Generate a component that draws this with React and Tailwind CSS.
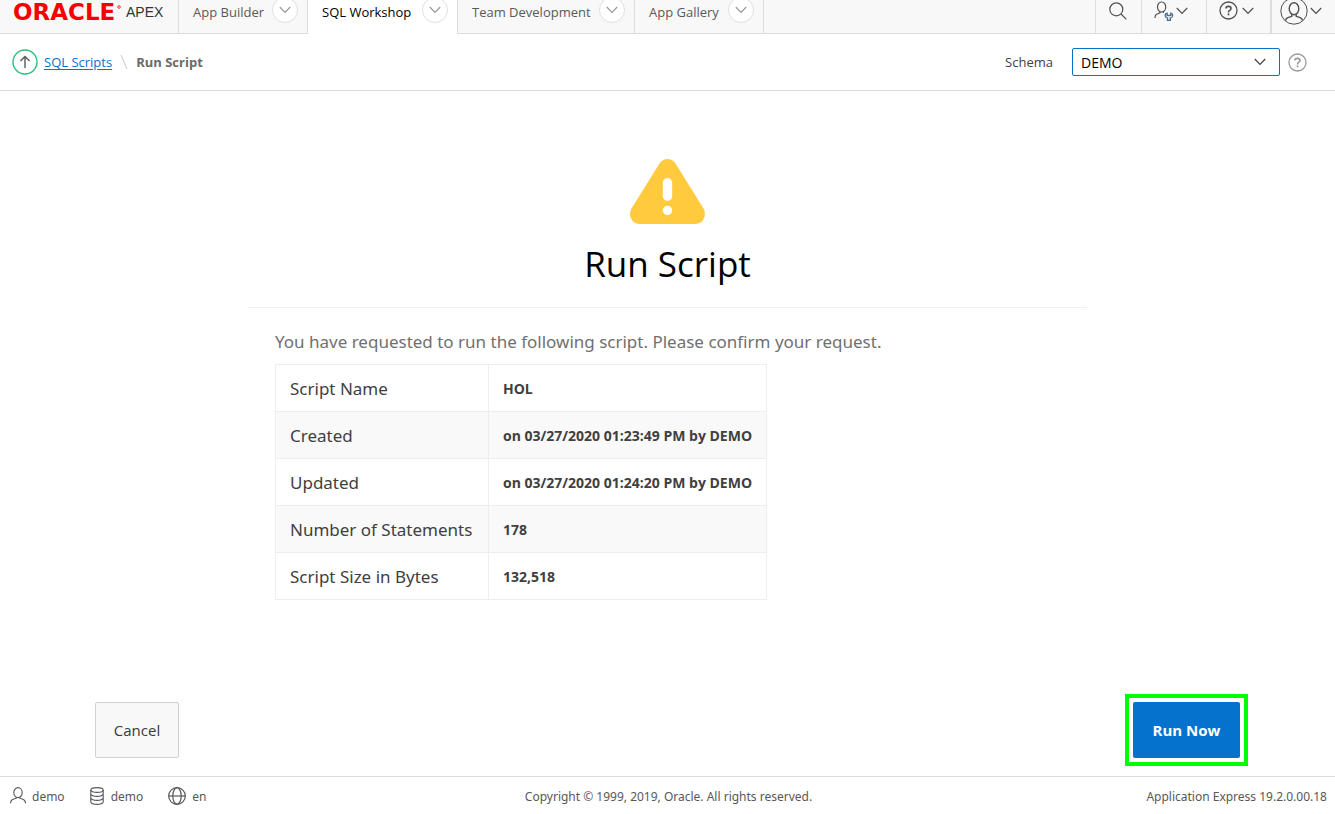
import React from "react";

function Chevron({ className = "" }) {
  return (
    <svg viewBox="0 0 12 8" className={className} fill="none" stroke="currentColor" strokeWidth="1.2" aria-hidden="true">
      <path d="M0.8 1 L6 6.4 L11.2 1" />
    </svg>
  );
}

function PersonIcon({ className = "" }) {
  return (
    <svg viewBox="0 0 16 17" className={className} fill="none" stroke="currentColor" strokeWidth="1.1" aria-hidden="true">
      <ellipse cx="8" cy="5.6" rx="4.2" ry="5" />
      <path d="M6.2 10 V11.2 L2.6 12.5 Q0.6 13.4 0.5 16.2 M9.8 10 V11.2 L13.4 12.5 Q15.4 13.4 15.5 16.2" />
    </svg>
  );
}

function AdminIcon() {
  return (
    <svg viewBox="0 0 20 20" className="h-5 w-5" fill="none" stroke="currentColor" strokeWidth="1.2" aria-hidden="true">
      <ellipse cx="7.6" cy="6" rx="4.1" ry="5" />
      <path d="M6 10.4 V11.8 L2.6 13.2 Q1 14 0.9 17 M9.4 10.4 V12" />
      <path
        d="M13.2 12.2 Q10.8 12.8 11.2 15 Q11.6 16.6 13.4 17 V19.4 H16.4 V17 Q18.4 16.6 18.7 15 Q18.9 12.8 16.7 12.2 V14.4 H13.2 Z"
        stroke="#4a6f8c"
        fill="#d5dfe7"
      />
    </svg>
  );
}

function HelpIcon({ className = "" }) {
  return (
    <svg viewBox="0 0 19 19" className={className} fill="none" stroke="currentColor" aria-hidden="true">
      <circle cx="9.5" cy="9.5" r="8.5" strokeWidth="1.3" />
      <path d="M7 7.6 Q7 5.4 9.5 5.4 Q12 5.4 12 7.4 Q12 8.6 10.6 9.4 Q9.5 10 9.5 11.4" strokeWidth="1.6" />
      <path d="M9.5 12.5 V14.3" strokeWidth="1.7" />
    </svg>
  );
}

function SearchIcon() {
  return (
    <svg viewBox="0 0 18 18" className="h-[18px] w-[18px]" fill="none" stroke="currentColor" strokeWidth="1.2" aria-hidden="true">
      <circle cx="7.3" cy="7.3" r="6.5" />
      <path d="M12 12 L17.4 17.4" />
    </svg>
  );
}

function AvatarIcon() {
  return (
    <svg viewBox="0 0 28 28" className="h-7 w-7" fill="none" stroke="currentColor" aria-hidden="true">
      <circle cx="14" cy="14" r="13.2" strokeWidth="1" />
      <ellipse cx="14" cy="11.8" rx="4.8" ry="6" strokeWidth="1.4" />
      <path d="M11.8 17.2 V19.3 L7.8 20.6 Q6 21.4 5.4 23.6 M16.2 17.2 V19.3 L20.2 20.6 Q22 21.4 22.6 23.6" strokeWidth="1.4" />
    </svg>
  );
}

function DatabaseIcon() {
  return (
    <svg viewBox="0 0 14 18" className="h-[18px] w-3.5" fill="none" stroke="currentColor" strokeWidth="1.1" aria-hidden="true">
      <ellipse cx="7" cy="3" rx="6.2" ry="2.4" />
      <path d="M0.8 3 V15 Q1.6 17.4 7 17.4 Q12.4 17.4 13.2 15 V3 M0.8 7 Q1.6 9.4 7 9.4 Q12.4 9.4 13.2 7 M0.8 11 Q1.6 13.4 7 13.4 Q12.4 13.4 13.2 11" />
    </svg>
  );
}

function GlobeIcon() {
  return (
    <svg viewBox="0 0 18 18" className="h-[18px] w-[18px]" fill="none" stroke="currentColor" strokeWidth="1.2" aria-hidden="true">
      <circle cx="9" cy="9" r="8.3" />
      <ellipse cx="9" cy="9" rx="4.2" ry="8.3" />
      <path d="M0.6 9 H17.4" />
    </svg>
  );
}

const tabs = [
  { label: "App Builder", size: "w-[129px]" },
  { label: "SQL Workshop", size: "w-[150px]", active: true },
  { label: "Team Development", size: "w-[177px]" },
  { label: "App Gallery", size: "w-[129px]" },
];

const details = [
  ["Script Name", "HOL"],
  ["Created", "on 03/27/2020 01:23:49 PM by DEMO"],
  ["Updated", "on 03/27/2020 01:24:20 PM by DEMO"],
  ["Number of Statements", "178"],
  ["Script Size in Bytes", "132,518"],
];

function Tab({ label, size, active }) {
  return (
    <div
      className={`flex shrink-0 items-center justify-between border-r border-[#dcdcdc] pr-[9px] pl-3.5 ${size} ${
        active ? "bg-white text-black" : "border-b bg-[#f8f8f8] text-[#585858]"
      }`}
    >
      <a href="#" className="pt-1.5 whitespace-nowrap">{label}</a>
      <button
        type="button"
        aria-label={`${label} menu`}
        className="flex h-[26px] w-[26px] shrink-0 items-center justify-center rounded-full border border-[#e0e0e0] bg-white text-[#999]"
      >
        <Chevron className="h-2 w-3" />
      </button>
    </div>
  );
}

function Header() {
  return (
    <header className="h-[34px] overflow-hidden">
      <div className="-mt-3.5 flex h-12 text-[13px]">
        <a href="#" className="flex w-[179px] shrink-0 items-center border-r border-b border-[#dcdcdc] bg-[#f8f8f8] pt-1 pl-[13px]">
          <span className="flex w-[113px] items-center text-[#f80000]">
            <span className="font-['DejaVu_Sans',sans-serif] text-[23px] leading-5 font-bold">ORACLE</span>
            <svg viewBox="0 0 4 14" className="ml-0.5 h-3.5 w-1" fill="none" stroke="currentColor" strokeWidth="0.8" aria-hidden="true">
              <circle cx="2" cy="2" r="1.3" />
            </svg>
          </span>
          <span className="pt-0.5 font-['Liberation_Sans',sans-serif] text-[14px] text-[#333]">APEX</span>
        </a>
        {tabs.map((tab) => (
          <Tab key={tab.label} {...tab} />
        ))}
        <div className="flex grow justify-end border-b border-[#dcdcdc] bg-[#f8f8f8] text-[#505050]">
          <button type="button" aria-label="Search" className="flex w-[46px] items-center justify-center border-l border-[#dcdcdc] pt-0.5 pr-0.5">
            <SearchIcon />
          </button>
          <button type="button" aria-label="Administration" className="flex w-[65px] items-center gap-0.5 border-l border-[#dcdcdc] pt-0.5 pl-3">
            <AdminIcon />
            <Chevron className="h-2 w-3" />
          </button>
          <button type="button" aria-label="Help" className="flex w-16 items-center gap-1 border-l border-[#dcdcdc] pt-0.5 pl-3">
            <HelpIcon className="h-[19px] w-[19px]" />
            <Chevron className="h-2 w-3" />
          </button>
          <button type="button" aria-label="Account" className="flex w-[65px] items-center gap-0.5 border-l-2 border-[#dcdcdc] pt-0.5 pl-2">
            <AvatarIcon />
            <Chevron className="h-2 w-3" />
          </button>
        </div>
      </div>
    </header>
  );
}

function Breadcrumb() {
  return (
    <div className="flex h-[57px] items-center justify-between border-b border-[#dcdcdc] pr-7 pl-3 text-[13px]">
      <nav aria-label="Breadcrumb" className="flex items-center">
        <a href="#" aria-label="Up" className="mr-1.5 text-[#585858]">
          <svg viewBox="0 0 26 26" className="h-[26px] w-[26px]" fill="none" aria-hidden="true">
            <circle cx="13" cy="13" r="12" stroke="#2bbf7e" strokeWidth="1.4" />
            <path d="M13 19 V7.4 M8.4 12 L13 7.4 L17.6 12" stroke="currentColor" strokeWidth="1.4" />
          </svg>
        </a>
        <a href="#" className="pt-0.5 text-[#0572ce] underline underline-offset-2">SQL Scripts</a>
        <svg viewBox="0 0 8 16" className="mx-2 h-4 w-2" fill="none" stroke="#c8c8c8" aria-hidden="true">
          <path d="M1 1 L7 15" />
        </svg>
        <span className="pt-0.5 font-bold text-[#6a6a6a]">Run Script</span>
      </nav>
      <div className="flex items-center">
        <label htmlFor="schema" className="mr-[19px] pt-0.5 text-[#404040]">Schema</label>
        <div className="grid w-52 items-center">
          <select
            id="schema"
            className="col-start-1 row-start-1 h-7 w-full appearance-none rounded-xs border border-[#0572ce] bg-white pl-2 text-[14px] text-black"
          >
            <option>DEMO</option>
          </select>
          <Chevron className="pointer-events-none col-start-1 row-start-1 mr-3.5 h-2 w-3 justify-self-end text-[#404040]" />
        </div>
        <button type="button" aria-label="Schema help" className="ml-2 text-[#999]">
          <HelpIcon className="h-[19px] w-[19px]" />
        </button>
      </div>
    </div>
  );
}

export default function App() {
  return (
    <div className="flex min-h-screen flex-col bg-white font-['Open_Sans','Noto_Sans',sans-serif]">
      <Header />
      <Breadcrumb />
      <main className="flex grow flex-col">
        <section className="mx-auto w-full max-w-[839px] grow pt-[68px]">
          <div className="flex flex-col items-center border-b border-[#f0f0f0] pb-[18px]">
            <svg viewBox="0 0 75 65" className="h-[65px] w-[75px]" aria-hidden="true">
              <path
                d="M29.5 4.5 Q32.5 0 37.5 0 Q42.5 0 45.5 4.5 L73.5 49.5 Q75.5 53 74.6 57.5 Q72.8 64.3 66 65 H9 Q2.2 64.3 0.4 57.5 Q-0.5 53 1.5 49.5 Z"
                fill="#ffca3d"
              />
              <rect x="32.8" y="19" width="9.4" height="23" rx="4.7" fill="#fff" />
              <circle cx="37.5" cy="51.4" r="4.7" fill="#fff" />
            </svg>
            <h1 className="mt-3.5 text-[35px] leading-[51px] text-black">Run Script</h1>
          </div>
          <div className="px-[27px] pt-5">
            <p className="font-['Noto_Sans',sans-serif] text-[17px] leading-7 text-[#707070]">
              You have requested to run the following script. Please confirm your request.
            </p>
            <table className="mt-2 border-collapse text-left text-[#404040]">
              <tbody>
                {details.map(([name, value]) => (
                  <tr key={name} className="h-[47px] even:bg-[#f9f9f9]">
                    <th scope="row" className="w-[213px] border border-[#eeeeee] px-3.5 pt-0.5 font-['Noto_Sans',sans-serif] text-[17px] font-normal whitespace-nowrap">{name}</th>
                    <td className="w-[278px] border border-[#eeeeee] px-3.5 text-[14px] font-bold whitespace-nowrap">{value}</td>
                  </tr>
                ))}
              </tbody>
            </table>
          </div>
        </section>
        <div className="flex items-center justify-between pr-[87px] pb-2.5 pl-[95px]">
          <button type="button" className="h-14 w-[84px] rounded-xs border border-[#d0d0d0] bg-[#f8f8f8] text-[15px] text-[#383838]">
            Cancel
          </button>
          <div className="border-4 border-[#00ff00] p-1">
            <button type="button" className="block h-14 w-[107px] rounded-xs bg-[#0572ce] text-[15px] font-bold text-white">
              Run Now
            </button>
          </div>
        </div>
      </main>
      <footer className="grid h-[38px] grid-cols-[1fr_auto_1fr] items-center border-t border-[#dcdcdc] pr-2 pl-2.5 font-['Noto_Sans',sans-serif] text-[12px] text-[#585858]">
        <div className="flex items-center gap-[25px]">
          <span className="flex items-center gap-1.5"><PersonIcon className="h-[17px] w-4" /><span className="pt-0.5">demo</span></span>
          <span className="flex items-center gap-[7px]"><DatabaseIcon /><span className="pt-0.5">demo</span></span>
          <span className="flex items-center gap-1.5"><GlobeIcon /><span className="pt-0.5">en</span></span>
        </div>
        <span className="pt-0.5">Copyright © 1999, 2019, Oracle. All rights reserved.</span>
        <span className="pt-0.5 text-right">Application Express 19.2.0.00.18</span>
      </footer>
    </div>
  );
}
